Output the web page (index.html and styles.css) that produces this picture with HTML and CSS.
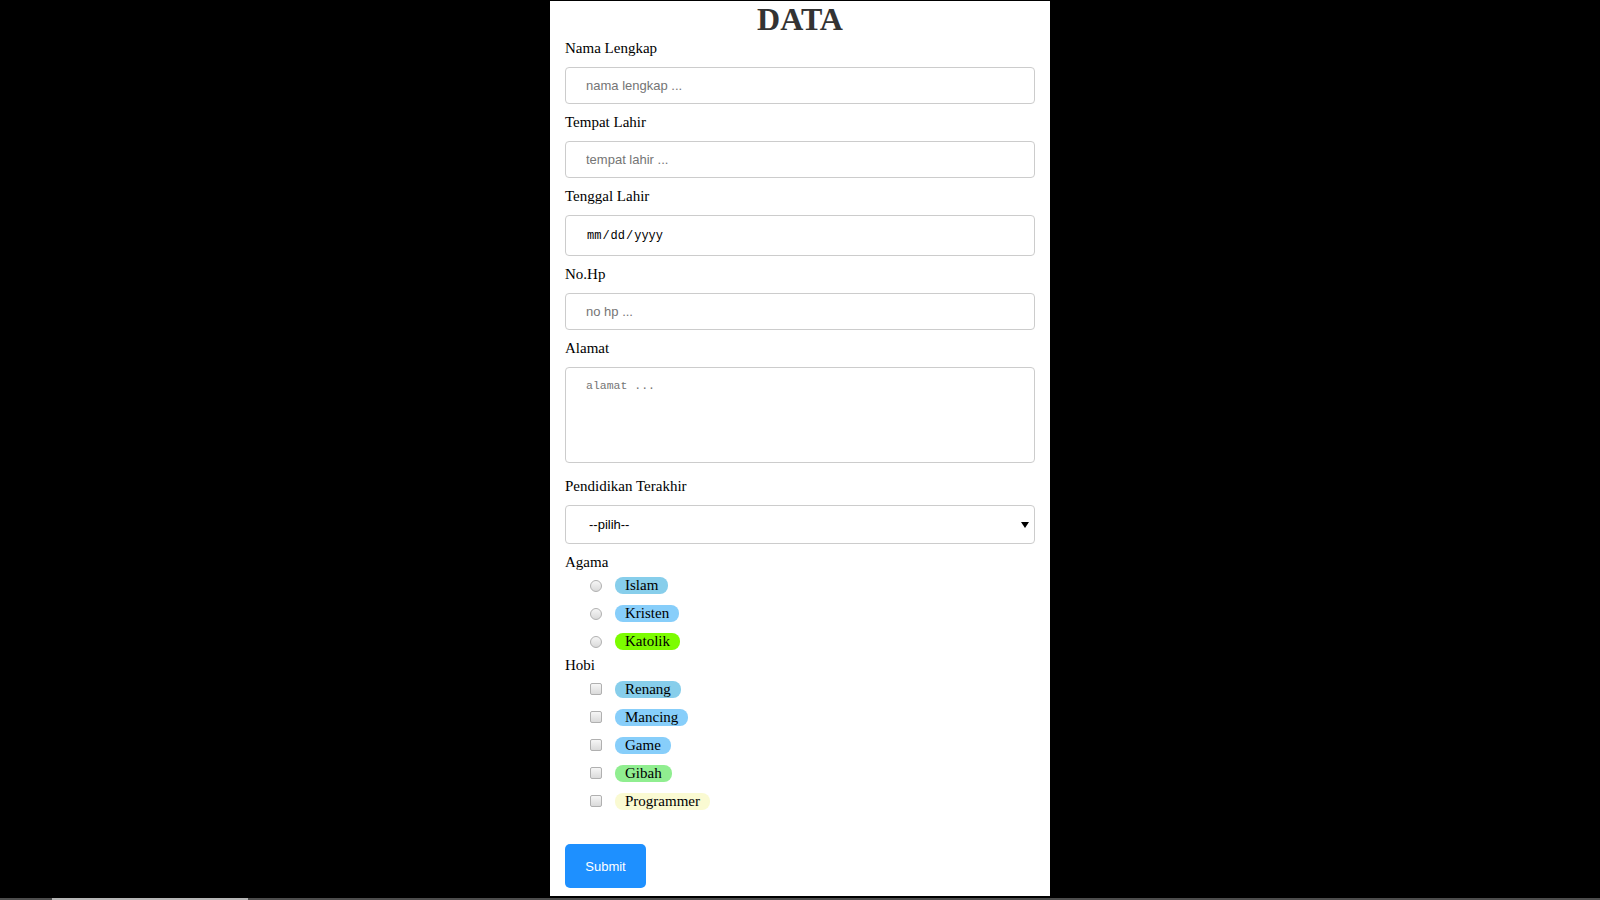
FILE: index.html
```html
<!DOCTYPE html>
<html lang="id">
<head>
<meta charset="utf-8">
<title>DATA</title>
<link rel="stylesheet" href="styles.css">
</head>
<body>
<div class="screen">
  <div class="stage">
    <main class="panel">
      <h1 class="title">DATA</h1>
      <form class="form">
        <div class="field">
          <label class="field-label" for="nama">Nama Lengkap</label>
          <input class="control" id="nama" type="text" placeholder="nama lengkap ...">
        </div>
        <div class="field">
          <label class="field-label" for="tempat">Tempat Lahir</label>
          <input class="control" id="tempat" type="text" placeholder="tempat lahir ...">
        </div>
        <div class="field">
          <label class="field-label" for="tgl">Tenggal Lahir</label>
          <input class="control control-date" id="tgl" type="date">
        </div>
        <div class="field">
          <label class="field-label" for="hp">No.Hp</label>
          <input class="control" id="hp" type="text" placeholder="no hp ...">
        </div>
        <div class="field field-area">
          <label class="field-label" for="alamat">Alamat</label>
          <textarea class="control control-area" id="alamat" placeholder="alamat ..."></textarea>
        </div>
        <div class="field">
          <label class="field-label" for="pend">Pendidikan Terakhir</label>
          <div class="select-wrap">
            <select class="control control-select" id="pend">
              <option>--pilih--</option>
              <option>SD</option>
              <option>SMP</option>
              <option>SMA</option>
              <option>S1</option>
            </select>
          </div>
        </div>
        <div class="group">
          <div class="field-label">Agama</div>
          <div class="options">
            <label class="option"><input class="radio" type="radio" name="agama"><span class="badge badge-sky">Islam</span></label>
            <label class="option"><input class="radio" type="radio" name="agama"><span class="badge badge-lightsky">Kristen</span></label>
            <label class="option"><input class="radio" type="radio" name="agama"><span class="badge badge-lawn">Katolik</span></label>
          </div>
        </div>
        <div class="group group-hobi">
          <div class="field-label">Hobi</div>
          <div class="options">
            <label class="option"><input class="check" type="checkbox"><span class="badge badge-sky">Renang</span></label>
            <label class="option"><input class="check" type="checkbox"><span class="badge badge-lightsky">Mancing</span></label>
            <label class="option"><input class="check" type="checkbox"><span class="badge badge-lightsky">Game</span></label>
            <label class="option"><input class="check" type="checkbox"><span class="badge badge-lightgreen">Gibah</span></label>
            <label class="option"><input class="check" type="checkbox"><span class="badge badge-gold">Programmer</span></label>
          </div>
        </div>
        <button class="submit" type="submit">Submit</button>
      </form>
    </main>
  </div>
  <div class="strip"><span class="strip-seg"></span></div>
</div>
</body>
</html>
```

FILE: styles.css
```css
* { box-sizing: border-box; }

html, body {
  margin: 0;
  padding: 0;
  background: #000;
}

.screen {
  height: 100vh;
  display: flex;
  flex-direction: column;
}

.stage {
  flex: 1;
  display: flex;
  justify-content: center;
  padding: 1px 0 2px;
}

.panel {
  width: 500px;
  background: #fff;
  padding: 0 15px;
  font-family: "Liberation Serif", "Times New Roman", serif;
  font-size: 15px;
  color: #000;
}

.title {
  margin: 0 0 2px;
  font-size: 32px;
  line-height: 37px;
  font-weight: bold;
  text-align: center;
  color: #333;
}

.form {
  display: flex;
  flex-direction: column;
}

.field {
  display: flex;
  flex-direction: column;
  margin-bottom: 10px;
}

.field-area {
  margin-bottom: 15px;
}

.field-label {
  display: block;
  line-height: 17px;
  margin-bottom: 10px;
}

.control {
  display: block;
  width: 100%;
  height: 37px;
  margin: 0;
  padding: 0 20px;
  border: 1px solid #ccc;
  border-radius: 4px;
  background: #fff;
  font-family: "Liberation Sans", Arial, sans-serif;
  font-size: 13px;
  color: #000;
  outline: none;
}

.control::placeholder {
  color: #757575;
}

.control-date {
  height: 41px;
  font-family: "Liberation Mono", "Courier New", monospace;
  font-size: 12px;
}

.control-date::-webkit-calendar-picker-indicator {
  display: none;
}

.control-area {
  height: 96px;
  padding: 11px 20px;
  resize: none;
  font-family: "Liberation Mono", "Courier New", monospace;
  font-size: 11.5px;
  line-height: 14px;
}

.select-wrap {
  position: relative;
}

.select-wrap::after {
  content: "";
  position: absolute;
  right: 6px;
  top: 17px;
  border-left: 4px solid transparent;
  border-right: 4px solid transparent;
  border-top: 6px solid #000;
  pointer-events: none;
}

.control-select {
  height: 39px;
  padding: 0 20px 0 23px;
  -webkit-appearance: none;
  appearance: none;
}

.group {
  display: flex;
  flex-direction: column;
}

.group .field-label {
  margin-bottom: 6px;
}

.group-hobi .field-label {
  margin-bottom: 7px;
}

.options {
  display: flex;
  flex-direction: column;
  gap: 11px;
  padding-left: 25px;
  margin-bottom: 7px;
}

.option {
  display: flex;
  align-items: center;
  gap: 13px;
  line-height: 17px;
}

.radio,
.check {
  -webkit-appearance: none;
  appearance: none;
  width: 12px;
  height: 12px;
  margin: 0;
  flex: none;
  border: 1px solid #b0b0b0;
  background: linear-gradient(#f6f6f6, #dadada);
}

.radio {
  border-radius: 50%;
}

.check {
  border-radius: 2px;
  position: relative;
  top: -1px;
}

.badge {
  display: inline-block;
  padding: 0 10px;
  border-radius: 8px;
  line-height: 17px;
  height: 17px;
  color: #000;
}

.badge-sky { background: #87ceeb; }
.badge-lightsky { background: #87cefa; }
.badge-lawn { background: #7cfc00; }
.badge-lightgreen { background: #90ee90; }
.badge-gold { background: #fafad2; }

.submit {
  align-self: flex-start;
  margin-top: 27px;
  width: 81px;
  height: 44px;
  border: none;
  border-radius: 5px;
  background: #1e90ff;
  color: #fff;
  font-family: "Liberation Sans", Arial, sans-serif;
  font-size: 13px;
  cursor: pointer;
}

.strip {
  height: 2px;
  background: #4d4d4d;
  display: flex;
  padding-left: 52px;
}

.strip-seg {
  width: 196px;
  background: #b5b5b5;
}
```
